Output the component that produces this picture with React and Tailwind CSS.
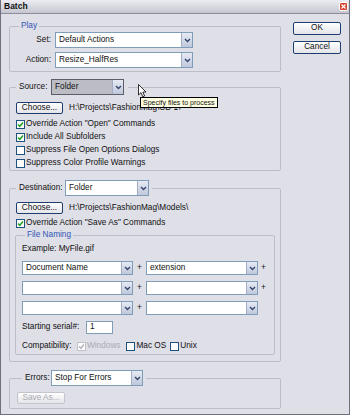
import React from "react";

function Chevron() {
  return (
    <svg width="7" height="5" viewBox="0 0 7 5">
      <path d="M1 1l2.5 2.5L6 1" fill="none" stroke="#34466b" strokeWidth="1.4" />
    </svg>
  );
}

function Select({ value, className, gray }) {
  return (
    <div
      className={`flex border ${gray ? "border-[#5d5d6a] bg-[#bcbcc5]" : "border-[#7f9db9] bg-white"} ${className}`}
    >
      <div className="flex-1 flex items-center pl-[3px] leading-none whitespace-nowrap overflow-hidden">
        {value}
      </div>
      <div className="w-[11px] flex items-center justify-center border-l border-[#a3aec6] bg-gradient-to-b from-[#e6eaf4] to-[#bfc8dc]">
        <Chevron />
      </div>
    </div>
  );
}

function Check({ checked, disabled, label, className = "" }) {
  return (
    <div className={`flex items-center ${className}`}>
      <div
        className={`w-[9px] h-[9px] flex items-center justify-center border bg-white ${disabled ? "border-[#c0c0c8]" : "border-[#1c5180]"}`}
      >
        {checked && (
          <svg width="7" height="7" viewBox="0 0 7 7">
            <path
              d="M1 3.5l1.8 1.8L6 1.5"
              fill="none"
              stroke={disabled ? "#b4b4bc" : "#21a121"}
              strokeWidth="1.5"
            />
          </svg>
        )}
      </div>
      <span className={`ml-[1px] leading-none whitespace-nowrap ${disabled ? "text-[#a9a9b2]" : ""}`}>{label}</span>
    </div>
  );
}

function Btn({ children, className = "", disabled }) {
  return (
    <div
      className={`flex items-center justify-center rounded-[2px] border leading-none bg-gradient-to-b from-white to-[#e4e4ea] ${disabled ? "border-[#c4c4cc] text-[#a9a9b2]" : "border-[#1d3e6e]"} ${className}`}
    >
      {children}
    </div>
  );
}

const group = "border border-[#bdbdc7] rounded-[2px] p-0 m-0";

export default function App() {
  return (
    <div className="relative w-[350px] h-[415px] bg-[#dfdfe7] border border-t-0 border-[#6e6e7c] text-[8.25px] text-[#111] font-['Liberation_Sans',Arial,sans-serif] overflow-hidden">
      {/* title bar */}
      <div className="h-[14px] flex items-center justify-between border-b border-[#8c8c9a] bg-gradient-to-b from-[#ececf2] to-[#c6c6d0]">
        <span className="pl-[3px] font-bold text-[8.5px] leading-none">Batch</span>
        <div className="mr-[1px] w-[9px] h-[9px] rounded-[2px] border border-white bg-[#d4402c] flex items-center justify-center">
          <svg width="5" height="5" viewBox="0 0 5 5">
            <path d="M0.5 0.5l4 4M4.5 0.5l-4 4" stroke="#fff" strokeWidth="1.2" />
          </svg>
        </div>
      </div>

      <div className="flex pl-[8px]">
        {/* left column */}
        <div className="w-[272px] pt-[7px]">
          <fieldset className={`${group} pb-[3px]`}>
            <legend className="ml-[9px] px-[2px] h-[10px] leading-[10px] text-[#3156b8]">Play</legend>
            <div className="mt-[1px] flex items-center h-[16px]">
              <span className="w-[41px] text-right">Set:</span>
              <Select value="Default Actions" className="ml-[4px] w-[138px] h-[16px]" />
            </div>
            <div className="mt-[4px] flex items-center h-[16px]">
              <span className="w-[41px] text-right">Action:</span>
              <Select value="Resize_HalfRes" className="ml-[4px] w-[138px] h-[16px]" />
            </div>
          </fieldset>

          <fieldset className={`${group} mt-[7px]`}>
            <legend className="ml-[6px] px-[3px] pr-[4px]">
              <div className="flex items-center h-[16px]">
                <span className="w-[32px]">Source:</span>
                <Select value="Folder" gray className="w-[73px] h-[16px]" />
              </div>
            </legend>
            <div className="mt-[7px] pl-[6px] flex items-center h-[12px]">
              <Btn className="w-[47px] h-[12px]">Choose...</Btn>
              <span className="ml-[6px] leading-none">H:\Projects\FashionMag\CD 1\</span>
            </div>
            <div className="mt-[4px] pl-[6px]">
              <Check checked label={'Override Action "Open" Commands'} className="h-[13px]" />
              <Check checked label="Include All Subfolders" className="h-[13px]" />
              <Check label="Suppress File Open Options Dialogs" className="h-[13px]" />
              <Check label="Suppress Color Profile Warnings" className="h-[13px]" />
            </div>
          </fieldset>

          <fieldset className={`${group} mt-[9px] pb-[6px]`}>
            <legend className="ml-[6px] px-[3px]">
              <div className="flex items-center h-[16px]">
                <span className="w-[46px]">Destination:</span>
                <Select value="Folder" className="w-[84px] h-[16px]" />
              </div>
            </legend>
            <div className="mt-[6px] pl-[6px] flex items-center h-[12px]">
              <Btn className="w-[47px] h-[12px]">Choose...</Btn>
              <span className="ml-[6px] leading-none">H:\Projects\FashionMag\Models\</span>
            </div>
            <div className="mt-[3px] pl-[6px]">
              <Check checked label={'Override Action "Save As" Commands'} className="h-[13px]" />
            </div>

            <fieldset className={`${group} ml-[5px] w-[260px] pb-[3px]`}>
              <legend className="ml-[9px] px-[2px] h-[10px] leading-[10px] text-[#3156b8]">File Naming</legend>
              <div className="pl-[6px]">
                <div className="mt-[4px] h-[10px] leading-[10px]">Example: MyFile.gif</div>
                {[
                  ["Document Name", "extension"],
                  ["", ""],
                  ["", ""],
                ].map(([a, b], i) => (
                  <div key={i} className={`flex items-center h-[14px] ${i === 0 ? "mt-[7px]" : "mt-[6px]"}`}>
                    <Select value={a} className="w-[111px] h-[14px]" />
                    <span className="w-[13px] text-center leading-none">+</span>
                    <Select value={b} className="w-[112px] h-[14px]" />
                    {i < 2 && <span className="ml-[3px] leading-none">+</span>}
                  </div>
                ))}
                <div className="mt-[6px] flex items-center h-[13px]">
                  <span className="w-[64px] leading-none">Starting serial#:</span>
                  <div className="w-[27px] h-[13px] border border-[#7f9db9] bg-white flex items-center pl-[3px] leading-none">
                    1
                  </div>
                </div>
                <div className="mt-[7px] flex items-center h-[10px]">
                  <span className="w-[55px] leading-none">Compatibility:</span>
                  <Check checked disabled label="Windows" />
                  <Check label="Mac OS" className="ml-[6px]" />
                  <Check label="Unix" className="ml-[4px]" />
                </div>
              </div>
            </fieldset>
          </fieldset>

          <fieldset className={`${group} mt-[8px] pb-[4px]`}>
            <legend className="ml-[12px] px-[3px]">
              <div className="flex items-center h-[16px]">
                <span className="w-[26px]">Errors:</span>
                <Select value="Stop For Errors" className="w-[92px] h-[16px]" />
              </div>
            </legend>
            <div className="mt-[6px] pl-[7px]">
              <Btn disabled className="w-[48px] h-[12px]">Save As...</Btn>
            </div>
          </fieldset>
        </div>

        {/* right column */}
        <div className="ml-[12px] pt-[8px]">
          <Btn className="w-[48px] h-[13px]">OK</Btn>
          <Btn className="mt-[6px] w-[48px] h-[13px]">Cancel</Btn>
        </div>
      </div>

      {/* cursor + tooltip over the source group */}
      <svg className="absolute left-[137px] top-[84px]" width="9" height="14" viewBox="0 0 9 14">
        <path d="M0.5 0.5V11L3 8.6 4.8 12.8 6.6 12 4.8 8H8Z" fill="#fff" stroke="#000" strokeWidth="0.8" />
      </svg>
      <div className="absolute left-[139px] top-[97px] h-[11px] px-[2px] flex items-center border border-black bg-[#ffffe1] text-[7px] leading-none whitespace-nowrap">
        Specify files to process
      </div>
    </div>
  );
}
